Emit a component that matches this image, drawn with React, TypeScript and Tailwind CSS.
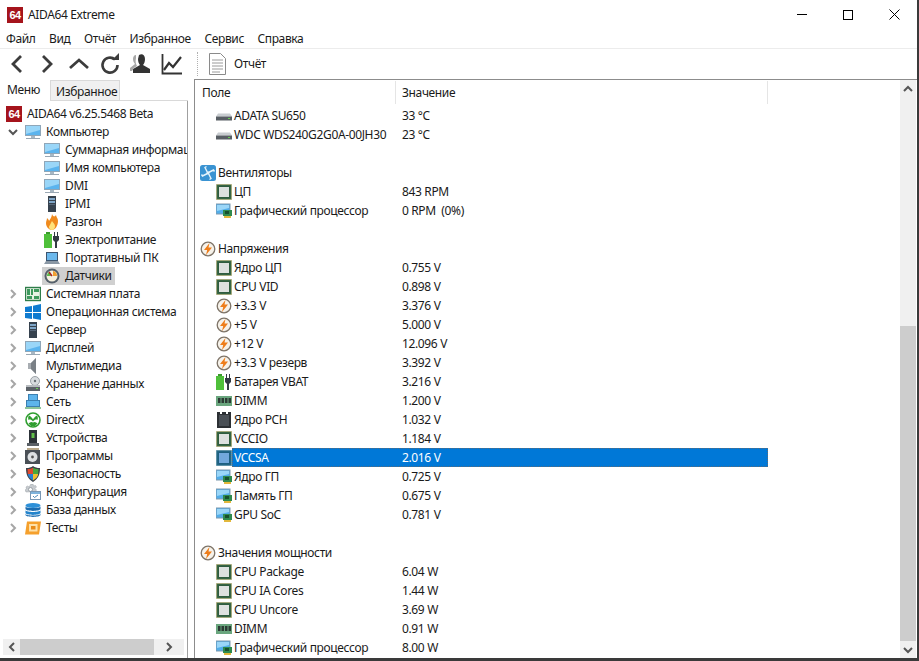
import { ReactNode } from "react";

const Logo = () => (
  <div className="w-4 h-4 bg-[#a5141c] text-white font-bold text-[11px] leading-4 text-center tracking-[-0.5px] font-['Liberation_Sans',sans-serif]">64</div>
);

const Svg = ({ children }: { children: ReactNode }) => (
  <svg width="16" height="16" viewBox="0 0 16 16" className="shrink-0">{children}</svg>
);

const Monitor = () => (
  <Svg>
    <rect x="0.5" y="1.5" width="15" height="10" fill="#5bb4ee" stroke="#8fa6b8" />
    <path d="M1 2h14v4L1 10z" fill="#9ad6f8" />
    <rect x="6" y="12" width="4" height="2" fill="#a8b8c4" />
    <rect x="1" y="14" width="14" height="1" fill="#9aa8b4" />
  </Svg>
);
const Server = () => (
  <Svg>
    <rect x="4" y="0" width="8" height="16" fill="#36424e" />
    <rect x="5" y="2" width="6" height="2" fill="#7fa6c8" />
    <rect x="5" y="5" width="6" height="2" fill="#7fa6c8" />
    <rect x="5" y="8" width="6" height="1" fill="#58687a" />
  </Svg>
);
const Flame = () => (
  <Svg>
    <path d="M8 0c1 3 3 3 4 1 0 2 2 3 2 6 0 5-3 9-6 9s-6-3-6-7c0-2 1-3 1-5 1 1 2 2 2 3 1-2 3-4 3-7z" fill="#f08a1c" />
    <path d="M8 7c1 2 3 3 3 5s-1 4-3 4-3-2-3-3 1-2 3-6z" fill="#ffe27a" />
  </Svg>
);
const Power = () => (
  <Svg>
    <rect x="0" y="2" width="8" height="14" fill="#4fc03a" />
    <rect x="2" y="0" width="4" height="2" fill="#3a9a2c" />
    <path d="M10 0h1v4h2V0h1v4h1v4l-2 2v6h-2v-6L9 8V4h1z" fill="#333b44" />
  </Svg>
);
const Laptop = () => (
  <Svg>
    <rect x="2.5" y="2.5" width="11" height="8" fill="#6bb8ec" stroke="#3c5570" />
    <path d="M2 11h12l2 3H0z" fill="#8a97a4" />
  </Svg>
);
const Gauge = () => (
  <Svg>
    <circle cx="8" cy="8" r="7.5" fill="#55606a" />
    <circle cx="8" cy="8" r="5.5" fill="#f6f1df" />
    <path d="M3 8a5 5 0 0 1 3-4.5L7 8z" fill="#5cb848" />
    <path d="M9 3a5 5 0 0 1 4 5H9z" fill="#f0a030" />
    <path d="M8 8 5 4" stroke="#b02020" strokeWidth="1.4" />
  </Svg>
);
const Board = () => (
  <Svg>
    <rect x="0.5" y="1.5" width="15" height="13" fill="#e8f2e4" stroke="#2f7d4a" strokeWidth="1.4" />
    <path d="M2 3h3v6H2zM6 3h2v6H6zM9 3h5v3H9zM2 10h5v3H2zM9 10h5v3H9z" fill="#3f9a5e" />
  </Svg>
);
const Windows = () => (
  <Svg>
    <path d="M0 3l7-1v6H0zM8 1.8 16 0v8H8zM0 9h7v6l-7-1zM8 9h8v7l-8-1.6z" fill="#0f7bd0" />
  </Svg>
);
const Speaker = () => (
  <Svg>
    <path d="M3 5h3l5-5v16l-5-5H3z" fill="#a8adb2" />
    <path d="M6 5l5-5v16l-5-5z" fill="#7a8086" />
  </Svg>
);
const Storage = () => (
  <Svg>
    <circle cx="10" cy="5" r="4.5" fill="#d8dcdf" stroke="#9aa0a6" />
    <circle cx="10" cy="5" r="1.2" fill="#6a7076" />
    <rect x="1" y="10" width="14" height="5" fill="#5c6268" />
    <rect x="1" y="9" width="14" height="2" fill="#b8bcc0" />
    <rect x="11" y="12" width="2" height="1" fill="#68d050" />
  </Svg>
);
const Network = () => (
  <Svg>
    <rect x="3.5" y="0.5" width="9" height="6" fill="#5db4ec" stroke="#3c7fb0" />
    <rect x="1.5" y="6.5" width="13" height="6" fill="#5db4ec" stroke="#3c7fb0" />
    <rect x="0" y="13" width="16" height="2" fill="#8cc49a" />
  </Svg>
);
const Xbox = () => (
  <Svg>
    <circle cx="8" cy="8" r="7" fill="#fff" stroke="#2f9e2f" strokeWidth="1.6" />
    <path d="M4 3.500C6 4.500 7 6 8 7.200 9 6 10 4.500 12 3.500 13 5 13 6 12.500 8 11 7 10 7.500 8 9.500 6 7.500 5 7 3.500 8 3 6 3 5 4 3.500z" fill="#2f9e2f" />
    <path d="M3.500 11.500C5 10 6.500 9.500 8 10.500 9.500 9.500 11 10 12.500 11.500L10 14H6z" fill="#2f9e2f" />
  </Svg>
);
const Device = () => (
  <Svg>
    <rect x="4" y="0" width="8" height="13" fill="#2c3238" />
    <rect x="6.5" y="3" width="3" height="5" fill="#62c04a" />
    <rect x="2" y="13" width="12" height="3" fill="#5a6066" />
  </Svg>
);
const Programs = () => (
  <Svg>
    <rect x="2" y="0" width="12" height="2" fill="#b8a88a" />
    <rect x="0" y="2" width="15" height="14" fill="#4a5056" />
    <circle cx="7.5" cy="9" r="5" fill="#dfe2e4" />
    <circle cx="7.5" cy="9" r="1.4" fill="#555" />
  </Svg>
);
const Shield = () => (
  <Svg>
    <path d="M8 0c2 1.5 4 2 7 2 0 7-2 11-7 14C3 13 1 9 1 2c3 0 5-.5 7-2z" fill="#3a4048" />
    <path d="M2.500 3c2.400 0 4-.5 5.500-1.300V8H2.800z" fill="#e04a30" />
    <path d="M8 1.700C9.500 2.500 11 3 13.500 3L13.200 8H8z" fill="#4aa83c" />
    <path d="M2.800 8H8v6.500C5 12.500 3.200 11 2.800 8z" fill="#2a80d0" />
    <path d="M8 8h5.200C12.800 11 11 12.500 8 14.500z" fill="#f2c02c" />
  </Svg>
);
const Config = () => (
  <Svg>
    <path d="M6 0h2l.5 2 2-.5 1 1.500L10 4.500l1.500 1.500-1 1.500L1 8 0 6l1.500-1L1 3l1.500-1L4 3z" fill="#c8ccd0" stroke="#9aa0a6" strokeWidth="0.5" />
    <circle cx="5.500" cy="5.500" r="2" fill="#fff" stroke="#9aa0a6" />
    <rect x="5.500" y="7.500" width="10" height="8" fill="#fff" stroke="#7a98b4" />
    <rect x="6" y="8" width="9" height="2" fill="#7fb4dc" />
    <path d="M8 12l1.500 1.500L13 11" stroke="#4a88b8" fill="none" />
  </Svg>
);
const Database = () => (
  <Svg>
    <ellipse cx="8" cy="3.500" rx="7.500" ry="2.500" fill="#2e90d8" />
    <path d="M0.500 4.500c1 2 14 2 15 0v2.500c-1 2.500-14 2.500-15 0z" fill="#1c6cb0" />
    <path d="M0.500 8.200c1 2.300 14 2.300 15 0V11c-1 2.500-14 2.500-15 0z" fill="#2484cc" />
    <path d="M0.500 12c1 2 14 2 15 0v1c-1 2.500-14 2.500-15 0z" fill="#1c6cb0" />
  </Svg>
);
const Tests = () => (
  <Svg>
    <path d="M2 1.500h14L14 14.500H0z" fill="#f5a02c" />
    <rect x="4" y="4" width="8.500" height="7.500" fill="#fde0a8" />
    <rect x="6" y="6" width="4.500" height="3.500" fill="#e88a18" />
  </Svg>
);
const Drive = () => (
  <Svg>
    <path d="M2 5.500h12l2 3H0z" fill="#c8ccd0" />
    <rect x="0" y="8.500" width="16" height="4" fill="#585e64" />
    <rect x="12" y="10" width="2" height="1" fill="#66d050" />
  </Svg>
);
const Fan = () => (
  <Svg>
    <rect x="0" y="0" width="16" height="16" rx="2.500" fill="#3a93d2" />
    <path d="M7.500 7.500 5 2.500l1.500-1M8.500 7.500l5-2.500 1 1.500M8.500 8.500l2.500 5-1.500 1M7.500 8.500l-5 2.500-1-1.500" fill="none" stroke="#e6f4fc" strokeWidth="1.400" />
    <circle cx="8" cy="8" r="1.400" fill="#e6f4fc" />
  </Svg>
);
const Cpu = ({ selected }: { selected?: boolean }) => (
  <Svg>
    <rect x="0.500" y="0.500" width="15" height="15" fill={selected ? "#2a6f8a" : "#3f6e4a"} stroke={selected ? "#2a6f8a" : "#a89c58"} strokeDasharray="1 1" />
    <rect x="1.500" y="1.500" width="13" height="13" fill={selected ? "#1d5f80" : "#2f5c3e"} />
    <rect x="3" y="3" width="10" height="10" fill={selected ? "#72a8dc" : "#dde1df"} />
  </Svg>
);
const Gpu = () => (
  <Svg>
    <rect x="0" y="1" width="14" height="10" fill="#52aeea" stroke="#7f99ae" />
    <path d="M1 2h12v3L1 8z" fill="#9ad6f8" />
    <rect x="7" y="7" width="9" height="6" fill="#2f8a4e" />
    <rect x="9" y="8" width="4" height="3" fill="#17502e" />
    <rect x="8" y="13" width="7" height="2" fill="#e2b83c" />
  </Svg>
);
const Bolt = () => (
  <Svg>
    <circle cx="8" cy="8" r="6.800" fill="#f6f2ea" stroke="#7e7468" strokeWidth="1.300" />
    <path d="M9.500 2 4 9h3.200L6 14l6-7.500H8.500z" fill="#ee7d1a" />
  </Svg>
);
const Ram = () => (
  <Svg>
    <rect x="0" y="3" width="16" height="10" fill="#6aa67e" />
    <path d="M2 5h2.500v5H2zM5.500 5H8v5H5.500zM9 5h2.500v5H9zM12.500 5H15v5h-2.500z" fill="#2c3a34" />
  </Svg>
);
const Chip = () => (
  <Svg>
    <path d="M1 0h3v2h2V0h4v2h2V0h3v16H1z" fill="#2c3034" />
    <rect x="3" y="3" width="10" height="11" fill="#4a5056" />
  </Svg>
);

type TreeItem = { label: string; icon: ReactNode; open?: boolean; selected?: boolean };

const children: TreeItem[] = [
  { label: "Суммарная информация", icon: <Monitor /> },
  { label: "Имя компьютера", icon: <Monitor /> },
  { label: "DMI", icon: <Monitor /> },
  { label: "IPMI", icon: <Server /> },
  { label: "Разгон", icon: <Flame /> },
  { label: "Электропитание", icon: <Power /> },
  { label: "Портативный ПК", icon: <Laptop /> },
  { label: "Датчики", icon: <Gauge />, selected: true },
];

const groups: TreeItem[] = [
  { label: "Системная плата", icon: <Board /> },
  { label: "Операционная система", icon: <Windows /> },
  { label: "Сервер", icon: <Server /> },
  { label: "Дисплей", icon: <Monitor /> },
  { label: "Мультимедиа", icon: <Speaker /> },
  { label: "Хранение данных", icon: <Storage /> },
  { label: "Сеть", icon: <Network /> },
  { label: "DirectX", icon: <Xbox /> },
  { label: "Устройства", icon: <Device /> },
  { label: "Программы", icon: <Programs /> },
  { label: "Безопасность", icon: <Shield /> },
  { label: "Конфигурация", icon: <Config /> },
  { label: "База данных", icon: <Database /> },
  { label: "Тесты", icon: <Tests /> },
];

type Row = { field?: string; value?: string; icon?: ReactNode; head?: boolean; selected?: boolean };

const rows: Row[] = [
  { field: "ADATA SU650", value: "33 °C", icon: <Drive /> },
  { field: "WDC WDS240G2G0A-00JH30", value: "23 °C", icon: <Drive /> },
  {},
  { field: "Вентиляторы", icon: <Fan />, head: true },
  { field: "ЦП", value: "843 RPM", icon: <Cpu /> },
  { field: "Графический процессор", value: "0 RPM  (0%)", icon: <Gpu /> },
  {},
  { field: "Напряжения", icon: <Bolt />, head: true },
  { field: "Ядро ЦП", value: "0.755 V", icon: <Cpu /> },
  { field: "CPU VID", value: "0.898 V", icon: <Cpu /> },
  { field: "+3.3 V", value: "3.376 V", icon: <Bolt /> },
  { field: "+5 V", value: "5.000 V", icon: <Bolt /> },
  { field: "+12 V", value: "12.096 V", icon: <Bolt /> },
  { field: "+3.3 V резерв", value: "3.392 V", icon: <Bolt /> },
  { field: "Батарея VBAT", value: "3.216 V", icon: <Power /> },
  { field: "DIMM", value: "1.200 V", icon: <Ram /> },
  { field: "Ядро PCH", value: "1.032 V", icon: <Chip /> },
  { field: "VCCIO", value: "1.184 V", icon: <Cpu /> },
  { field: "VCCSA", value: "2.016 V", icon: <Cpu selected />, selected: true },
  { field: "Ядро ГП", value: "0.725 V", icon: <Gpu /> },
  { field: "Память ГП", value: "0.675 V", icon: <Gpu /> },
  { field: "GPU SoC", value: "0.781 V", icon: <Gpu /> },
  {},
  { field: "Значения мощности", icon: <Bolt />, head: true },
  { field: "CPU Package", value: "6.04 W", icon: <Cpu /> },
  { field: "CPU IA Cores", value: "1.44 W", icon: <Cpu /> },
  { field: "CPU Uncore", value: "3.69 W", icon: <Cpu /> },
  { field: "DIMM", value: "0.91 W", icon: <Ram /> },
  { field: "Графический процессор", value: "8.00 W", icon: <Gpu /> },
];

const Chevron = ({ d, color = "#a6a6a6", w = 2 }: { d: string; color?: string; w?: number }) => (
  <svg width="10" height="10" viewBox="0 0 10 10" className="shrink-0">
    <path d={d} fill="none" stroke={color} strokeWidth={w} />
  </svg>
);

const ToolIcon = ({ children }: { children: ReactNode }) => (
  <svg width="24" height="24" viewBox="0 0 24 24" className="shrink-0">{children}</svg>
);

function TreeRow({ item }: { item: TreeItem }) {
  return (
    <div className="flex items-center h-[18px] pl-[8px]">
      <Chevron d={item.open ? "M1 3l4 4 4-4" : "M3 1l4 4-4 4"} color={item.open ? "#555" : "#a6a6a6"} />
      <span className="ml-[7px]">{item.icon}</span>
      <span className="ml-[5px] whitespace-nowrap">{item.label}</span>
    </div>
  );
}

function DataRow({ row }: { row: Row }) {
  return (
    <div className="flex items-center h-[19px]">
      <div className={`shrink-0 ${row.head ? "pl-[5px]" : "pl-[21px]"}`}>{row.icon}</div>
      <div className={`flex h-full flex-1 items-center ${row.selected ? "bg-[#0078d7] text-white outline-1 outline-dotted -outline-offset-1 outline-[#5a6a78]" : ""}`}>
        <span className={`whitespace-nowrap ml-[2px] ${row.head ? "" : "w-[168px]"}`}>{row.field}</span>
        {!row.head && <span className="whitespace-pre">{row.value}</span>}
      </div>
    </div>
  );
}

export default function App() {
  return (
    <div className="w-[919px] h-[661px] flex flex-col overflow-hidden bg-white text-[12px] leading-4 tracking-[-0.36px] text-[#1a1a1a] border-r-2 border-b-[3px] border-[#3a3a3a] font-['Noto_Sans',sans-serif]">
      <div className="flex items-center h-[29px] shrink-0 pl-[7px]">
        <Logo />
        <span className="ml-[5px]">AIDA64 Extreme</span>
        <div className="ml-auto flex items-center">
          <div className="w-[46px] flex justify-center"><div className="w-[10px] h-px bg-black" /></div>
          <div className="w-[46px] flex justify-center"><div className="w-[10px] h-[10px] border border-black" /></div>
          <div className="w-[46px] flex justify-center">
            <svg width="11" height="11" viewBox="0 0 11 11"><path d="M0.500 0.500l10 10M10.500 0.500l-10 10" stroke="#000" /></svg>
          </div>
        </div>
      </div>

      <div className="flex items-center gap-[13.500px] h-[19px] shrink-0 pl-[6px] pt-[1px]">
        {["Файл", "Вид", "Отчёт", "Избранное", "Сервис", "Справка"].map((m) => (
          <span key={m}>{m}</span>
        ))}
      </div>
      <div className="h-px shrink-0 bg-[#ececec]" />

      <div className="flex items-center h-[30px] shrink-0 pl-[5px]">
        <ToolIcon><path d="M16 4 8 12l8 8" fill="none" stroke="#3c3c3c" strokeWidth="2.800" /></ToolIcon>
        <span className="ml-[6px]" />
        <ToolIcon><path d="M8 4l8 8-8 8" fill="none" stroke="#3c3c3c" strokeWidth="2.800" /></ToolIcon>
        <span className="ml-[8px]" />
        <ToolIcon><path d="M3 16l9-8 9 8" fill="none" stroke="#3c3c3c" strokeWidth="2.800" /></ToolIcon>
        <span className="ml-[7px]" />
        <ToolIcon>
          <path d="M17 7.500A7.500 7.500 0 1 0 19.500 13" fill="none" stroke="#3c3c3c" strokeWidth="2.600" />
          <path d="M14 8h7V1z" fill="#3c3c3c" />
        </ToolIcon>
        <span className="ml-[7px]" />
        <ToolIcon>
          <path d="M10 3c3-2 6 0 6 4 0 3-1 5-2 6l7 4v4H4v-4l7-4c-1-1-2-3-2-6z" fill="#333" />
          <path d="M7 3C5 3 4 5 4 7c0 2 1 4 2 5l-5 4v3h2l2-3 3-2c-1-2-2-4-1-8z" fill="#a8a8a8" />
        </ToolIcon>
        <span className="ml-[7px]" />
        <ToolIcon>
          <path d="M2.500 2v19.500H22" fill="none" stroke="#333" strokeWidth="1.800" />
          <path d="M4 18l5-7 4 4 8-10" fill="none" stroke="#333" strokeWidth="2.200" />
        </ToolIcon>
        <div className="ml-[13px] h-[24px] border-l border-dotted border-[#b0b0b0]" />
        <svg width="17" height="22" viewBox="0 0 17 22" className="ml-[11px] shrink-0">
          <path d="M0.500 0.500h11l5 5v16h-16z" fill="#fff" stroke="#8a8a8a" />
          <path d="M3 7h11M3 10h11M3 13h11M3 16h11M3 19h8" stroke="#9a9a9a" />
        </svg>
        <span className="ml-[8px]">Отчёт</span>
      </div>

      <div className="flex flex-1 min-h-0">
        <div className="flex flex-col w-[188px] shrink-0">
          <div className="flex items-end h-[22px] shrink-0 border-b border-[#d9d9d9]">
            <div className="w-[50px] h-[22px] pl-[7px] leading-[22px] -mb-px bg-white relative">Меню</div>
            <div className="w-[70px] h-[20px] pl-[5px] leading-[21px] bg-[#f0f0f0] border border-b-0 border-[#d9d9d9]">Избранное</div>
          </div>
          <div className="flex flex-col flex-1 min-h-0 border-r border-[#a0a0a0] pt-[4px]">
            <div className="flex items-center h-[18px] pl-[6px]">
              <Logo />
              <span className="ml-[5px] whitespace-nowrap">AIDA64 v6.25.5468 Beta</span>
            </div>
            <TreeRow item={{ label: "Компьютер", icon: <Monitor />, open: true }} />
            <div className="overflow-hidden">
              {children.map((c) => (
                <div key={c.label} className="flex items-center h-[18px] pl-[42px]">
                  <div className={`flex items-center h-full pl-[2px] pr-[3px] ${c.selected ? "bg-[#d0d0d0]" : ""}`}>
                    {c.icon}
                    <span className="ml-[5px] whitespace-nowrap">{c.label}</span>
                  </div>
                </div>
              ))}
            </div>
            {groups.map((g) => (
              <TreeRow key={g.label} item={g} />
            ))}
            <div className="mt-auto mx-[3px] mb-[3px] flex items-center h-[16px] bg-[#f0f0f0]">
              <div className="w-[17px] flex justify-center"><Chevron d="M7 1 3 5l4 4" color="#555" /></div>
              <div className="w-[134px] h-full bg-[#cdcdcd]" />
              <div className="flex-1 flex justify-center"><Chevron d="M3 1l4 4-4 4" color="#555" /></div>
            </div>
          </div>
        </div>

        <div className="flex flex-1 min-w-0 ml-[6px] border-l border-t border-[#8c8c8c]">
          <div className="flex flex-col flex-1 min-w-0">
            <div className="flex h-[24px] shrink-0 pt-[1px]">
              <div className="w-[201px] pl-[7px] leading-[24px] border-r border-[#e5e5e5]">Поле</div>
              <div className="w-[372px] pl-[6px] leading-[24px] border-r border-[#e5e5e5]">Значение</div>
            </div>
            <div className="w-[573px] pt-[2px]">
              {rows.map((r, i) => (
                <DataRow key={i} row={r} />
              ))}
            </div>
          </div>
          <div className="flex flex-col w-[16px] mr-[1px] shrink-0 bg-[#f0f0f0]">
            <div className="h-[17px] flex items-center justify-center"><Chevron d="M1 7l4-4 4 4" color="#555" /></div>
            <div className="h-[229px]" />
            <div className="flex-1 bg-[#cdcdcd]" />
            <div className="h-[17px] flex items-center justify-center"><Chevron d="M1 3l4 4 4-4" color="#555" /></div>
          </div>
        </div>
      </div>
    </div>
  );
}
